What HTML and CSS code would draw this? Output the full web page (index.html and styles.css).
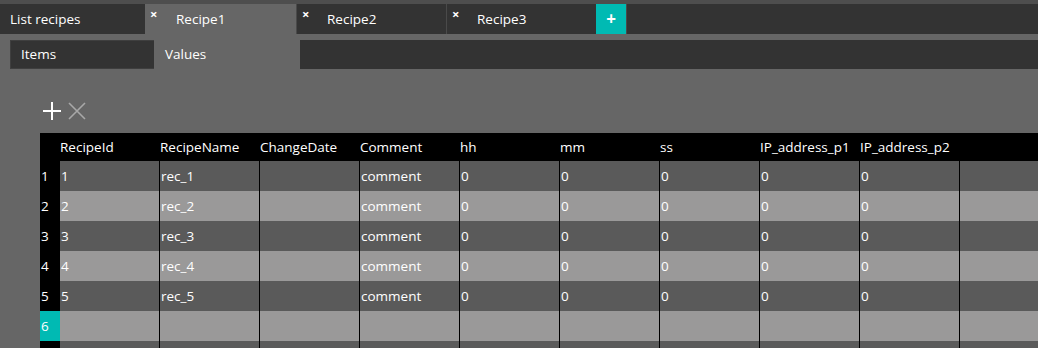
FILE: index.html
```html
<!DOCTYPE html>
<html lang="en">
<head>
    <meta charset="UTF-8">
    <title>Recipes</title>
    <link rel="stylesheet" href="styles.css">
</head>
<body>

<!-- Recipe tabs -->
<div class="tab-bar">
    <div class="tab first">List recipes</div>
    <div class="tab active"><span class="close">&times;</span>Recipe1</div>
    <div class="tab"><span class="close">&times;</span>Recipe2</div>
    <div class="tab"><span class="close">&times;</span>Recipe3</div>
    <div class="add-tab">+</div>
    <div class="tab-fill"></div>
</div>

<!-- Sub tabs -->
<div class="sub-bar">
    <div class="sub-tab">Items</div>
    <div class="sub-tab active">Values</div>
    <div class="sub-fill"></div>
</div>

<div class="toolbar">
    <svg class="tool" width="20" height="20" viewBox="0 0 20 20">
        <path d="M10 1 V19 M1 10 H19" stroke="#ffffff" stroke-width="2" fill="none"/>
    </svg>
    <svg class="tool" width="20" height="20" viewBox="0 0 20 20">
        <path d="M2 2 L18 18 M18 2 L2 18" stroke="#a8a8a8" stroke-width="1.6" fill="none"/>
    </svg>
</div>

<table class="grid">
    <colgroup>
        <col class="num-col">
        <col><col><col><col><col><col><col><col><col><col>
    </colgroup>
    <thead>
        <tr>
            <th></th>
            <th>RecipeId</th>
            <th>RecipeName</th>
            <th>ChangeDate</th>
            <th>Comment</th>
            <th>hh</th>
            <th>mm</th>
            <th>ss</th>
            <th>IP_address_p1</th>
            <th>IP_address_p2</th>
            <th></th>
        </tr>
    </thead>
    <tbody id="rows"></tbody>
</table>

<script>
    const rows = document.getElementById('rows');

    for (let i = 1; i <= 7; i++) {
        const tr = document.createElement('tr');
        tr.className = i % 2 === 0 ? 'light' : 'dark';

        let cells;
        if (i <= 5) {
            cells = [i, 'rec_' + i, '', 'comment', 0, 0, 0, 0, 0, ''];
        } else {
            cells = ['', '', '', '', '', '', '', '', '', ''];
        }

        const num = document.createElement('td');
        num.className = i === 6 ? 'num current' : 'num';
        num.textContent = i <= 6 ? i : '';
        tr.appendChild(num);

        cells.forEach(value => {
            const td = document.createElement('td');
            td.textContent = value;
            tr.appendChild(td);
        });

        rows.appendChild(tr);
    }
</script>
</body>
</html>
```

FILE: styles.css
```css
/* General Styles */
body {
    margin: 0;
    background-color: #666666;
    font-family: "Open Sans", "Noto Sans", sans-serif;
    font-size: 13.5px;
    color: #ffffff;
    overflow: hidden;
}

/* Top tabs */
.tab-bar {
    display: flex;
    height: 30px;
    border-top: 4px solid #4e4e4e;
    background-color: #333333;
}

.tab {
    position: relative;
    width: 150px;
    line-height: 30px;
    padding-left: 30px;
    box-sizing: border-box;
    background-color: #333333;
    border-left: 1px solid #4a4a4a;
}

.tab.first {
    width: 145px;
    padding-left: 10px;
    border-left: none;
}

.tab.active {
    width: 151px;
    padding-left: 31px;
    background-color: #666666;
    border-left: none;
}

.close {
    position: absolute;
    left: 5px;
    top: 0;
    font-size: 13px;
    font-weight: bold;
    line-height: 20px;
}

.add-tab {
    width: 30px;
    line-height: 30px;
    text-align: center;
    font-size: 17px;
    font-weight: bold;
    background-color: #00bab3;
}

.tab-fill {
    flex: 1;
    border-left: 1px solid #4a4a4a;
}

/* Sub tabs */
.sub-bar {
    display: flex;
    height: 29px;
    margin-top: 6px;
    padding-left: 10px;
}

.sub-tab {
    width: 144px;
    padding-left: 10px;
    box-sizing: border-box;
    background-color: #333333;
    border: 1px solid #3f3f3f;
    border-right: none;
    line-height: 27px;
}

.sub-tab.active {
    width: 146px;
    padding-left: 11px;
    background-color: #666666;
    border: none;
    line-height: 29px;
}

.sub-fill {
    flex: 1;
    background-color: #333333;
}

/* Toolbar */
.toolbar {
    display: flex;
    gap: 5px;
    padding: 32px 0 0 42px;
    height: 20px;
    margin-bottom: 12px;
}

/* Grid */
.grid {
    margin-left: 40px;
    border-collapse: separate;
    border-spacing: 0;
    table-layout: fixed;
    width: 1020px;
}

.grid col {
    width: 100px;
}

.grid col.num-col {
    width: 20px;
}

.grid th {
    height: 28px;
    padding: 0;
    text-align: left;
    font-weight: normal;
    background-color: #000000;
    white-space: nowrap;
}

.grid td {
    height: 30px;
    padding: 0 0 0 1px;
    border-right: 1px solid #000000;
    white-space: nowrap;
    box-sizing: border-box;
}

.grid tr.dark td {
    background-color: #5a5a5a;
}

.grid tr.light td {
    background-color: #9a9999;
}

.grid td.num {
    background-color: #000000 !important;
    border-right: none;
}

.grid td.num.current {
    background-color: #00bab3 !important;
}
```
